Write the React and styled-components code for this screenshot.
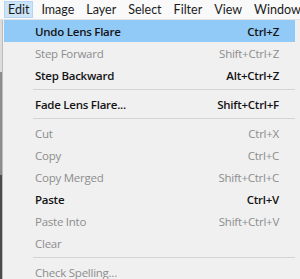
import styled, { createGlobalStyle } from 'styled-components'

const GlobalStyle = createGlobalStyle`
  html, body {
    margin: 0;
    padding: 0;
    width: 300px;
    height: 279px;
    overflow: hidden;
    background: #f0f0f0;
  }
  * { box-sizing: border-box; }
`

const menuBar = ['Edit', 'Image', 'Layer', 'Select', 'Filter', 'View', 'Window']

const items = [
  { label: 'Undo Lens Flare', keys: 'Ctrl+Z', active: true },
  { label: 'Step Forward', keys: 'Shift+Ctrl+Z', disabled: true },
  { label: 'Step Backward', keys: 'Alt+Ctrl+Z' },
  { sep: true },
  { label: 'Fade Lens Flare...', keys: 'Shift+Ctrl+F' },
  { sep: true },
  { label: 'Cut', keys: 'Ctrl+X', disabled: true },
  { label: 'Copy', keys: 'Ctrl+C', disabled: true },
  { label: 'Copy Merged', keys: 'Shift+Ctrl+C', disabled: true },
  { label: 'Paste', keys: 'Ctrl+V' },
  { label: 'Paste Into', keys: 'Shift+Ctrl+V', disabled: true },
  { label: 'Clear', disabled: true },
  { sep: true },
  { label: 'Check Spelling...', disabled: true },
]

export default function App() {
  return (
    <Screen>
      <GlobalStyle />
      <Bar>
        {menuBar.map((m) => (
          <BarItem key={m} open={m === 'Edit'}>{m}</BarItem>
        ))}
      </Bar>
      <Body>
        <Backdrop />
        <Menu>
          {items.map((it, i) =>
            it.sep ? (
              <Separator key={i} />
            ) : (
              <Row key={i} active={it.active} disabled={it.disabled}>
                <Label>{it.label}</Label>
                <Keys>{it.keys}</Keys>
              </Row>
            )
          )}
        </Menu>
      </Body>
    </Screen>
  )
}

const Screen = styled.div`
  width: 300px;
  height: 279px;
  display: flex;
  flex-direction: column;
  font-family: 'Open Sans', 'Noto Sans', sans-serif;
`

const Bar = styled.div`
  height: 20px;
  display: flex;
  align-items: center;
  gap: 4px;
  padding-left: 4px;
  background: #f9f9fa;
  border-bottom: 1px solid #e2e2e2;
  font-family: Lato, 'Open Sans', sans-serif;
`

const BarItem = styled.div`
  height: 17px;
  padding: 0 3px;
  display: flex;
  align-items: center;
  font-size: 12.5px;
  color: #1b1b1b;
  background: ${(p) => (p.open ? '#cce4f7' : 'transparent')};
  border: 1px solid ${(p) => (p.open ? '#b5d6f2' : 'transparent')};
`

const Body = styled.div`
  flex: 1;
  display: flex;
  min-height: 0;
`

const Backdrop = styled.div`
  width: 2px;
  background: linear-gradient(#dcdcdc 0 20%, #8c8c8c 20% 60%, #4a4a4a 60%);
`

const Menu = styled.div`
  flex: 1;
  padding: 0 5px 0 1px;
  border-left: 1px solid #bdbdbd;
  background: #f0f0f0;
  display: flex;
  flex-direction: column;
`

const Row = styled.div`
  height: 22px;
  flex-shrink: 0;
  display: flex;
  align-items: center;
  justify-content: space-between;
  padding: 0 16px 0 31px;
  font-size: 11.5px;
  letter-spacing: -0.25px;
  font-weight: ${(p) => (p.disabled ? 400 : 600)};
  color: ${(p) => (p.disabled ? '#8d8d8d' : '#141414')};
  background: ${(p) => (p.active ? '#91c9f7' : 'transparent')};
`

const Label = styled.span`
  white-space: nowrap;
`

const Keys = styled.span`
  white-space: nowrap;
`

const Separator = styled.div`
  height: 7px;
  flex-shrink: 0;
  display: flex;
  align-items: center;
  padding-left: 29px;
  &::after {
    content: '';
    flex: 1;
    height: 1px;
    background: #d5d5d5;
  }
`
